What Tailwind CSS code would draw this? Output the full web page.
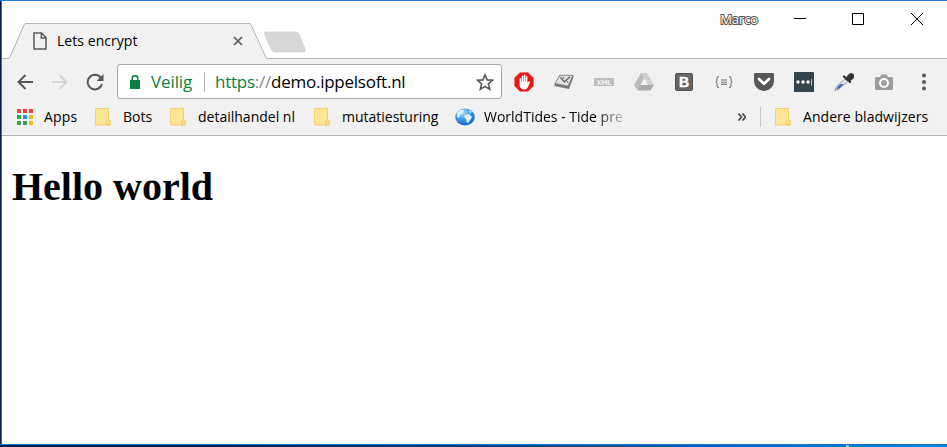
<!DOCTYPE html>
<html lang="nl">
<head>
<meta charset="utf-8">
<title>Lets encrypt</title>
<script src="https://cdn.jsdelivr.net/npm/@tailwindcss/browser@4"></script>
</head>
<body class="w-[947px] h-[447px] overflow-hidden bg-white font-['Open_Sans','Noto_Sans',sans-serif] text-black">
<svg class="hidden">
  <symbol id="folder" viewBox="0 0 16 18"><path d="M.5.5h13v12h1.500v4.500H.5z" fill="#ffe596" stroke="#f3d26d"/><path d="M11.500 17v-3.500l1.500-1.500h2v5z" fill="#ffe088" stroke="#eec95f"/></symbol>
</svg>
<div class="h-full flex flex-col border-t border-[#1a80d8]">
  <div class="flex-1 min-h-0 flex flex-col border-l border-[#06204a]">
  <div class="flex-1 min-h-0 flex flex-col border-l border-[#1476c8]">

    <!-- Title bar and tab strip -->
    <header class="h-[57px] flex items-start justify-between">
      <div class="relative w-[310px] h-[58px] z-10">
        <svg class="absolute left-0 top-0" width="310" height="58" viewBox="0 0 310 58" fill="none">
          <path d="M0 57.500h5.500Q7.500 57.500 8.500 55L22 24q.5-1.500 2-1.500h223q1.500 0 2 1.500l14.500 31.500q1 2 3 2H310V58H0z" fill="#f1f1f1"/>
          <path d="M0 57.500h5.500Q7.500 57.500 8.500 55L22 24q.5-1.500 2-1.500h223q1.500 0 2 1.500l14.500 31.500q1 2 3 2H310" stroke="#b2b2b2"/>
          <path d="M263 31h31q2 0 3 2l6 15q1 3-1 3h-29q-3 0-4-3l-6-14q-1-3 0-3z" fill="#d7d7d7" stroke="#cdcdcd" stroke-width=".7"/>
        </svg>
        <div class="relative h-full flex items-center pt-[22px] pl-[31px]">
          <svg class="shrink-0" width="14" height="18" viewBox="0 0 14 18" fill="none" stroke="#5a5a5a" stroke-width="1.500"><path d="M1 1h7.500L13 5.500V17H1zM8.300 1v5H13"/></svg>
          <span class="ml-[10px] w-[176px] text-[14px] leading-[18px] tracking-[0.050px] whitespace-nowrap">Lets encrypt</span>
          <svg width="10" height="10" viewBox="0 0 10 10" stroke="#5a5a5a" stroke-width="1.700"><path d="M1 1l8 8M9 1L1 9"/></svg>
        </div>
      </div>
      <div class="flex items-start pr-[24px] pt-[10px]">
        <span class="mr-[36px] text-[13px] leading-[17px] text-white tracking-[-0.100px] [-webkit-text-stroke:2px_#555] [paint-order:stroke_fill]">Marco</span>
        <svg class="mr-[46px] mt-[2px]" width="12" height="12" stroke="#000"><path d="M0 5.500h12"/></svg>
        <svg class="mr-[47px] mt-[2px]" width="12" height="12" fill="none" stroke="#000"><path d="M.5.5h11v11H.5z"/></svg>
        <svg class="mt-[2px]" width="12" height="12" stroke="#000"><path d="M0 0l12 12M12 0L0 12"/></svg>
      </div>
    </header>

    <div class="h-[78px] shrink-0 flex flex-col bg-[#f1f1f1] border-t border-b border-[#b2b2b2]">
      <!-- Toolbar -->
      <div class="h-[46px] flex items-center pl-[15px] pb-[1px]">
        <svg width="16" height="16" viewBox="0 0 16 16" fill="none" stroke="#555" stroke-width="1.900"><path d="M16 8H1.500M8.500 1L1.500 8l7 7"/></svg>
        <svg class="ml-[19px]" width="16" height="16" viewBox="0 0 16 16" fill="none" stroke="#d4d4d4" stroke-width="1.900"><path d="M0 8h14.500M7.500 1l7 7-7 7"/></svg>
        <svg class="ml-[18px]" width="18" height="18" viewBox="0 0 18 18" fill="none" stroke="#555" stroke-width="2"><path d="M14.600 4.500A7.300 7.300 0 1 0 16 11"/><path d="M17.500 1v7h-7z" fill="#555" stroke="none"/></svg>
        <div class="ml-[13px] w-[385px] h-[35px] flex items-center rounded-[3px] border border-[#a9a9a9] bg-white">
          <svg class="ml-[12px]" width="10" height="14" viewBox="0 0 10 14"><path d="M0 5h10v9H0z" fill="#0b8043"/><path d="M2.200 6V3.500a2.800 2.800 0 0 1 5.600 0V6" fill="none" stroke="#0b8043" stroke-width="1.500"/></svg>
          <span class="ml-[11px] w-[53px] text-[17px] leading-[24px] text-[#0b8043] tracking-[-0.100px]">Veilig</span>
          <span class="w-px h-[20px] bg-[#b0b0b0]"></span>
          <span class="ml-[10px] w-[261px] text-[17px] leading-[24px] whitespace-nowrap tracking-[-0.250px]"><span class="text-[#0b8043]">https</span><span class="text-[#888]">://</span>demo.ippelsoft.nl</span>
          <svg width="18" height="18" viewBox="0 0 18 18" fill="none" stroke="#5a5a5a" stroke-width="1.600"><path d="M9 1.800l2.100 5.100 5.400.4-4.100 3.600 1.300 5.400L9 13.400l-4.700 2.900 1.300-5.400-4.100-3.600 5.400-.4z"/></svg>
        </div>
        <div class="ml-[2px] w-[440px] grid grid-cols-11 items-center justify-items-center">
          <svg width="20" height="20" viewBox="0 0 20 20"><path d="M6 .5h8L19.500 6v8L14 19.500H6L.5 14V6z" fill="#e8191c" stroke="#f26b6b" stroke-width=".6"/><path d="M5.600 6.500v6q0 4.500 4.500 5 3.500 0 4.500-4l1.600-3.800q-1-1-2 0L13.400 11V4.500q-.8-1-1.500 0v5h-.5v-6.500q-.8-1-1.600 0v6.500h-.5V4q-.8-1-1.500 0v6h-.5V6.500q-.8-1-1.700 0z" fill="#fff"/></svg>
          <svg width="20" height="16" viewBox="0 0 20 16"><path d="M5.500 1h14v2L15 15 .5 12v-2z" fill="#777"/><path d="M6 1.300h13L14 12 1 9.500z" fill="#e4e4e4" stroke="#808080" stroke-width=".8"/><path d="M6.500 3.500l4 4.500L16 2.800" fill="none" stroke="#555" stroke-width="1.200"/><path d="M8.500 3l2 1.500M13 7l1 2" fill="none" stroke="#666"/></svg>
          <svg width="20" height="8" viewBox="0 0 20 8"><path d="M0 0h20v8H0z" fill="#bdbdbd"/><text x="2.500" y="6.500" font-family="DejaVu Sans" font-weight="bold" font-size="6.500" textLength="15" fill="#f1f1f1">XML</text></svg>
          <svg width="20" height="18" viewBox="0 0 20 18"><path d="M7 0h6l7 12h-6z" fill="#d0d0d0"/><path d="M7 0l3 5.500L3.500 17.500 0 12z" fill="#bcbcbc"/><path d="M6.500 12H20l-3.500 5.500h-13z" fill="#aaa"/></svg>
          <svg width="18" height="18" viewBox="0 0 18 18"><rect x=".5" y=".5" width="17" height="17" rx="1.500" fill="#666" stroke="#505050"/><text x="9" y="14" text-anchor="middle" font-family="Liberation Sans" font-weight="bold" font-size="14" fill="#fff" stroke="#fff" stroke-width=".4">B</text></svg>
          <svg width="18" height="14" viewBox="0 0 18 14" fill="none" stroke="#777" stroke-width="1.100"><path d="M4 1.500q-2 0-2 2v2Q2 7 .5 7 2 7 2 8.500v2q0 2 2 2M14 1.500q2 0 2 2v2Q16 7 17.500 7 16 7 16 8.500v2q0 2-2 2M6 5h6M6 7.200h6M6 9.400h6"/></svg>
          <svg width="20" height="18" viewBox="0 0 20 18"><path d="M1 0h18q1 0 1 1v7a10 10 0 0 1-20 0V1q0-1 1-1z" fill="#575757"/><path d="M5 6l5 4.800L15 6" fill="none" stroke="#fff" stroke-width="2.600" stroke-linecap="round" stroke-linejoin="round"/></svg>
          <svg width="20" height="20" viewBox="0 0 20 20"><rect width="20" height="20" rx=".8" fill="#33444f"/><circle cx="4" cy="10" r="1.700" fill="#fff"/><circle cx="9" cy="10" r="1.700" fill="#fff"/><circle cx="14" cy="10" r="1.700" fill="#fff"/><path d="M17.500 7v6.500" stroke="#c4cacd"/></svg>
          <svg width="20" height="20" viewBox="0 0 20 20"><path d="M1 18.500l1.500-4L11 7l2.500 2.500L5 17z" fill="#e5e9ee" stroke="#999"/><path d="M2.500 17.500l1.300-3 3-2.500h3L5 16.500z" fill="#355fd4"/><path d="M10 4.500l6 5.500M12.500 7L15 3.500q1.800-2 3.300-.8t0 3.300L15 8.500z" fill="#333" stroke="#333" stroke-width="2.300" stroke-linecap="round"/></svg>
          <svg width="18" height="16" viewBox="0 0 18 16"><path d="M1.500 3H5l1.500-2.500h5L13 3h3.500Q18 3 18 4.500v10q0 1.500-1.500 1.500h-15Q0 16 0 14.500v-10Q0 3 1.500 3z" fill="#9c9c9c"/><circle cx="9" cy="9" r="4" fill="none" stroke="#fff" stroke-width="2"/></svg>
          <svg width="4" height="18" viewBox="0 0 4 18" fill="#5a5a5a"><circle cx="2" cy="2.500" r="2"/><circle cx="2" cy="9" r="2"/><circle cx="2" cy="15.500" r="2"/></svg>
        </div>
      </div>

      <!-- Bookmarks bar -->
      <nav class="h-[24px] flex items-center text-[14px] leading-[20px] whitespace-nowrap">
        <svg class="ml-[15px]" width="16" height="16" viewBox="0 0 16 16"><path d="M0 0h4v4H0zM6 0h4v4H6zM12 0h4v4h-4z" fill="#f04438"/><path d="M0 6h4v4H0zM0 12h4v4H0zM6 12h4v4H6z" fill="#35a15a"/><path d="M6 6h4v4H6z" fill="#2d8cf0"/><path d="M12 6h4v4h-4zM12 12h4v4h-4z" fill="#fbb614"/></svg>
        <span class="ml-[11px] w-[51px] tracking-[0.200px]">Apps</span>
        <svg width="16" height="18"><use href="#folder"/></svg><span class="ml-[12px] w-[47px]">Bots</span>
        <svg width="16" height="18"><use href="#folder"/></svg><span class="ml-[12px] w-[116px]">detailhandel nl</span>
        <svg width="16" height="18"><use href="#folder"/></svg><span class="ml-[12px] w-[113px]">mutatiesturing</span>
        <svg width="20" height="18" viewBox="0 0 20 18"><defs><radialGradient id="sea" cx=".4" cy=".25" r=".8"><stop offset="0" stop-color="#a9dcfb"/><stop offset=".5" stop-color="#3a9be8"/><stop offset="1" stop-color="#0a5cc0"/></radialGradient></defs><ellipse cx="10" cy="9" rx="9.800" ry="8.500" fill="url(#sea)"/><path d="M2 5l3-3 4 0-1 3-3 2-1 3-2-1zM10 7l4-1 3 3-3 5-2 1-1-4-2-2zM14 2l3 2-2 1z" fill="#ddf2fd"/></svg>
        <span class="ml-[9px] w-[143px] [mask-image:linear-gradient(90deg,#000_112px,transparent_146px)]">WorldTides - Tide pre</span>
        <svg class="ml-[111px]" width="8" height="8" viewBox="0 0 8 8" fill="none" stroke="#444" stroke-width="1.600"><path d="M.5.5L3.500 4 .5 7.500M4.500.5L7.500 4l-3 3.500"/></svg>
        <span class="ml-[14px] w-px h-[20px] bg-[#c4c4c4]"></span>
        <svg class="ml-[14px]" width="16" height="18"><use href="#folder"/></svg><span class="ml-[12px] tracking-[0.050px]">Andere bladwijzers</span>
      </nav>
    </div>

    <main class="flex-1 bg-white pl-[10px] pt-[28px]">
      <h1 class="font-['Liberation_Serif',serif] font-bold text-[40px] leading-[46px]">Hello world</h1>
    </main>
  </div>
  </div>
  <footer class="h-[3px] relative border-t border-[#1476c8] bg-linear-to-r from-[#041d43] from-20% via-[#0563b8] via-75% to-[#0786d3]"><span class="absolute left-[846px] top-0 w-[3px] h-[2px] bg-[#9cc4c8]"></span></footer>
</div>
</body>
</html>
